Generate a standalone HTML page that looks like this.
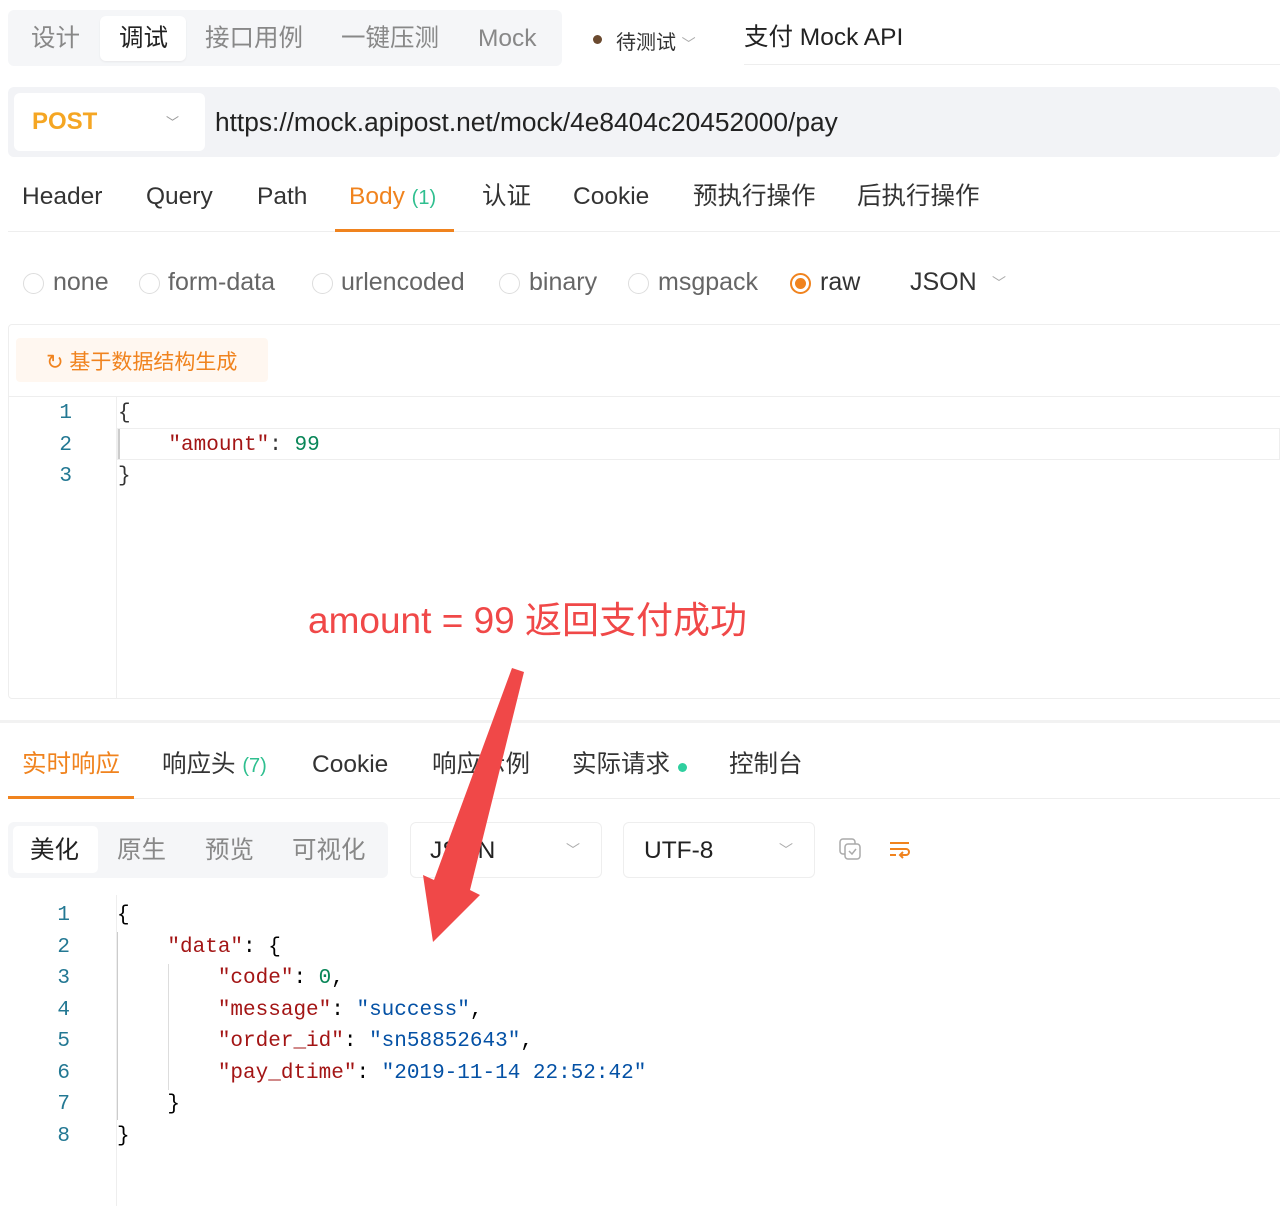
<!DOCTYPE html>
<html><head><meta charset="utf-8"><style>
*{margin:0;padding:0;box-sizing:border-box}
body{width:1280px;height:1206px;background:#fff;position:relative;overflow:hidden;font-family:"Liberation Sans","Noto Sans CJK SC",sans-serif;color:#333}
.a{position:absolute;white-space:nowrap}
.t{font-size:24.5px;line-height:30px}
.mono{font-family:"Liberation Mono","DejaVu Sans Mono",monospace;font-size:21px;line-height:31.5px}
.k{color:#a31515}.n{color:#098658}.s{color:#0451a5}.ln{color:#237893;text-align:right;width:30px}
.radio{position:absolute;width:21px;height:21px;border:1.5px solid #ddd;border-radius:50%}
.r{font-size:25px}
</style></head><body>
<div class="a" style="left:8px;top:10px;width:554px;height:56px;background:#f5f6f8;border-radius:6px"></div>
<div class="a" style="left:100px;top:16px;width:86px;height:45px;background:#fff;border-radius:6px;box-shadow:0 1px 2px rgba(0,0,0,.06)"></div>
<div class="a t" style="left:31px;top:24px;color:#888">设计</div>
<div class="a t" style="left:119px;top:24px;color:#222">调试</div>
<div class="a t" style="left:205px;top:24px;color:#888">接口用例</div>
<div class="a t" style="left:341px;top:24px;color:#888">一键压测</div>
<div class="a t" style="left:478px;top:24px;color:#888">Mock</div>
<div class="a" style="left:593px;top:35px;width:9px;height:9px;border-radius:50%;background:#6b4a2f"></div>
<div class="a" style="left:616px;top:26px;font-size:20px;color:#333">待测试 <span style="color:#aaa;font-size:14px">﹀</span></div>
<div class="a t" style="left:744px;top:23px;color:#222">支付 Mock API</div>
<div class="a" style="left:744px;top:64px;width:536px;height:1px;background:#eee"></div>
<div class="a" style="left:8px;top:87px;width:1272px;height:70px;background:#f2f3f6;border-radius:6px"></div>
<div class="a" style="left:14px;top:93px;width:191px;height:58px;background:#fff;border-radius:6px"></div>
<div class="a" style="left:32px;top:108px;font-size:24px;font-weight:bold;color:#f5a623">POST</div>
<div class="a" style="left:166px;top:112px;font-size:13px;color:#999">﹀</div>
<div class="a" style="left:215px;top:107px;font-size:26.3px;color:#222">https://mock.apipost.net/mock/4e8404c20452000/pay</div>
<div class="a t" style="left:22px;top:182px">Header</div>
<div class="a t" style="left:146px;top:182px">Query</div>
<div class="a t" style="left:257px;top:182px">Path</div>
<div class="a t" style="left:349px;top:182px;color:#f0831e">Body <span style="color:#2fbf8f;font-size:20px">(1)</span></div>
<div class="a t" style="left:482px;top:182px">认证</div>
<div class="a t" style="left:573px;top:182px">Cookie</div>
<div class="a t" style="left:693px;top:182px">预执行操作</div>
<div class="a t" style="left:857px;top:182px">后执行操作</div>
<div class="a" style="left:8px;top:231px;width:1272px;height:1px;background:#eee"></div>
<div class="a" style="left:335px;top:229px;width:119px;height:3px;background:#f0831e"></div>
<div class="radio" style="left:23px;top:273px"></div><div class="a r" style="left:53px;top:268px;color:#666">none</div>
<div class="radio" style="left:139px;top:273px"></div><div class="a r" style="left:168px;top:268px;color:#666">form-data</div>
<div class="radio" style="left:312px;top:273px"></div><div class="a r" style="left:341px;top:268px;color:#666">urlencoded</div>
<div class="radio" style="left:499px;top:273px"></div><div class="a r" style="left:529px;top:268px;color:#666">binary</div>
<div class="radio" style="left:628px;top:273px"></div><div class="a r" style="left:658px;top:268px;color:#666">msgpack</div>
<div class="radio" style="left:790px;top:273px;border:2px solid #f0831e"><div style="width:11px;height:11px;margin:3px;border-radius:50%;background:#f0831e"></div></div>
<div class="a r" style="left:820px;top:268px">raw</div>
<div class="a r" style="left:910px;top:268px">JSON</div>
<div class="a" style="left:992px;top:273px;font-size:14px;color:#aaa">﹀</div>
<div class="a" style="left:8px;top:324px;width:1280px;height:375px;border:1px solid #eee;border-radius:4px"></div>
<div class="a" style="left:16px;top:338px;width:252px;height:44px;background:#fff7f0;border-radius:4px"></div>
<div class="a" style="left:46px;top:346px;font-size:21px;color:#f0831e">↻ 基于数据结构生成</div>
<div class="a" style="left:8px;top:396px;width:1272px;height:1px;background:#eee"></div>
<div class="a" style="left:116px;top:397px;width:1px;height:302px;background:#eee"></div>
<div class="a" style="left:117px;top:428px;width:1163px;height:32px;border:1px solid #eee"></div>
<div class="a" style="left:118px;top:429px;width:2px;height:30px;background:#ccc"></div>
<div class="a mono ln" style="left:42px;top:398px">1<br>2<br>3</div>
<div class="a mono" style="left:118px;top:398px">{<br>&nbsp;&nbsp;&nbsp;&nbsp;<span class="k">"amount"</span>: <span class="n">99</span><br>}</div>
<div class="a" style="left:308px;top:590px;font-size:37px;color:#f04848">amount = 99 返回支付成功</div>
<div class="a" style="left:0;top:720px;width:1280px;height:3px;background:#f2f2f2"></div>
<div class="a t" style="left:22px;top:750px;color:#f0831e">实时响应</div>
<div class="a t" style="left:162px;top:750px">响应头 <span style="color:#2fbf8f;font-size:20px">(7)</span></div>
<div class="a t" style="left:312px;top:750px">Cookie</div>
<div class="a t" style="left:432px;top:750px">响应示例</div>
<div class="a t" style="left:572px;top:750px">实际请求</div>
<div class="a" style="left:678px;top:763px;width:9px;height:9px;border-radius:50%;background:#2fcf9f"></div>
<div class="a t" style="left:729px;top:750px">控制台</div>
<div class="a" style="left:8px;top:798px;width:1272px;height:1px;background:#eee"></div>
<div class="a" style="left:8px;top:796px;width:126px;height:3px;background:#f0831e"></div>
<div class="a" style="left:8px;top:822px;width:380px;height:56px;background:#f5f6f8;border-radius:6px"></div>
<div class="a" style="left:13px;top:826px;width:85px;height:47px;background:#fff;border-radius:5px"></div>
<div class="a t" style="left:30px;top:836px;color:#222">美化</div>
<div class="a t" style="left:117px;top:836px;color:#888">原生</div>
<div class="a t" style="left:205px;top:836px;color:#888">预览</div>
<div class="a t" style="left:292px;top:836px;color:#888">可视化</div>
<div class="a" style="left:410px;top:822px;width:192px;height:56px;border:1px solid #eee;border-radius:6px"></div>
<div class="a t" style="left:430px;top:836px;color:#222">JSON</div>
<div class="a" style="left:566px;top:840px;font-size:14px;color:#aaa">﹀</div>
<div class="a" style="left:623px;top:822px;width:192px;height:56px;border:1px solid #eee;border-radius:6px"></div>
<div class="a t" style="left:644px;top:836px;color:#222">UTF-8</div>
<div class="a" style="left:779px;top:840px;font-size:14px;color:#aaa">﹀</div>
<svg class="a" style="left:838px;top:837px" width="26" height="26" viewBox="0 0 26 26" fill="none" stroke="#aaa" stroke-width="1.5"><rect x="2" y="2" width="15" height="15" rx="3"/><rect x="7" y="7" width="15" height="15" rx="3" fill="#fff"/><path d="M11 14l3 3 4-5"/></svg>
<svg class="a" style="left:888px;top:838px" width="24" height="24" viewBox="0 0 24 24" fill="none" stroke="#f0831e" stroke-width="2"><path d="M2 5h19M2 11h16a3 3 0 010 6h-5M2 17h6M15 14l-3 3 3 3"/></svg>
<div class="a" style="left:116px;top:895px;width:1px;height:311px;background:#eee"></div>
<div class="a" style="left:117px;top:932px;width:1px;height:188px;background:#ccc"></div>
<div class="a" style="left:168px;top:964px;width:1px;height:126px;background:#ddd"></div>
<div class="a mono ln" style="left:40px;top:900px">1<br>2<br>3<br>4<br>5<br>6<br>7<br>8</div>
<div class="a mono" style="left:117px;top:900px;color:#000">{<br>
&nbsp;&nbsp;&nbsp;&nbsp;<span class="k">"data"</span>: {<br>
&nbsp;&nbsp;&nbsp;&nbsp;&nbsp;&nbsp;&nbsp;&nbsp;<span class="k">"code"</span>: <span class="n">0</span>,<br>
&nbsp;&nbsp;&nbsp;&nbsp;&nbsp;&nbsp;&nbsp;&nbsp;<span class="k">"message"</span>: <span class="s">"success"</span>,<br>
&nbsp;&nbsp;&nbsp;&nbsp;&nbsp;&nbsp;&nbsp;&nbsp;<span class="k">"order_id"</span>: <span class="s">"sn58852643"</span>,<br>
&nbsp;&nbsp;&nbsp;&nbsp;&nbsp;&nbsp;&nbsp;&nbsp;<span class="k">"pay_dtime"</span>: <span class="s">"2019-11-14 22:52:42"</span><br>
&nbsp;&nbsp;&nbsp;&nbsp;}<br>}</div>
<svg class="a" style="left:0;top:0" width="1280" height="1206"><path d="M512 668 L524 672 L470 890 L480 895 L433 942 L423 875 L434 880 Z" fill="#f04848"/></svg>
</body></html>
